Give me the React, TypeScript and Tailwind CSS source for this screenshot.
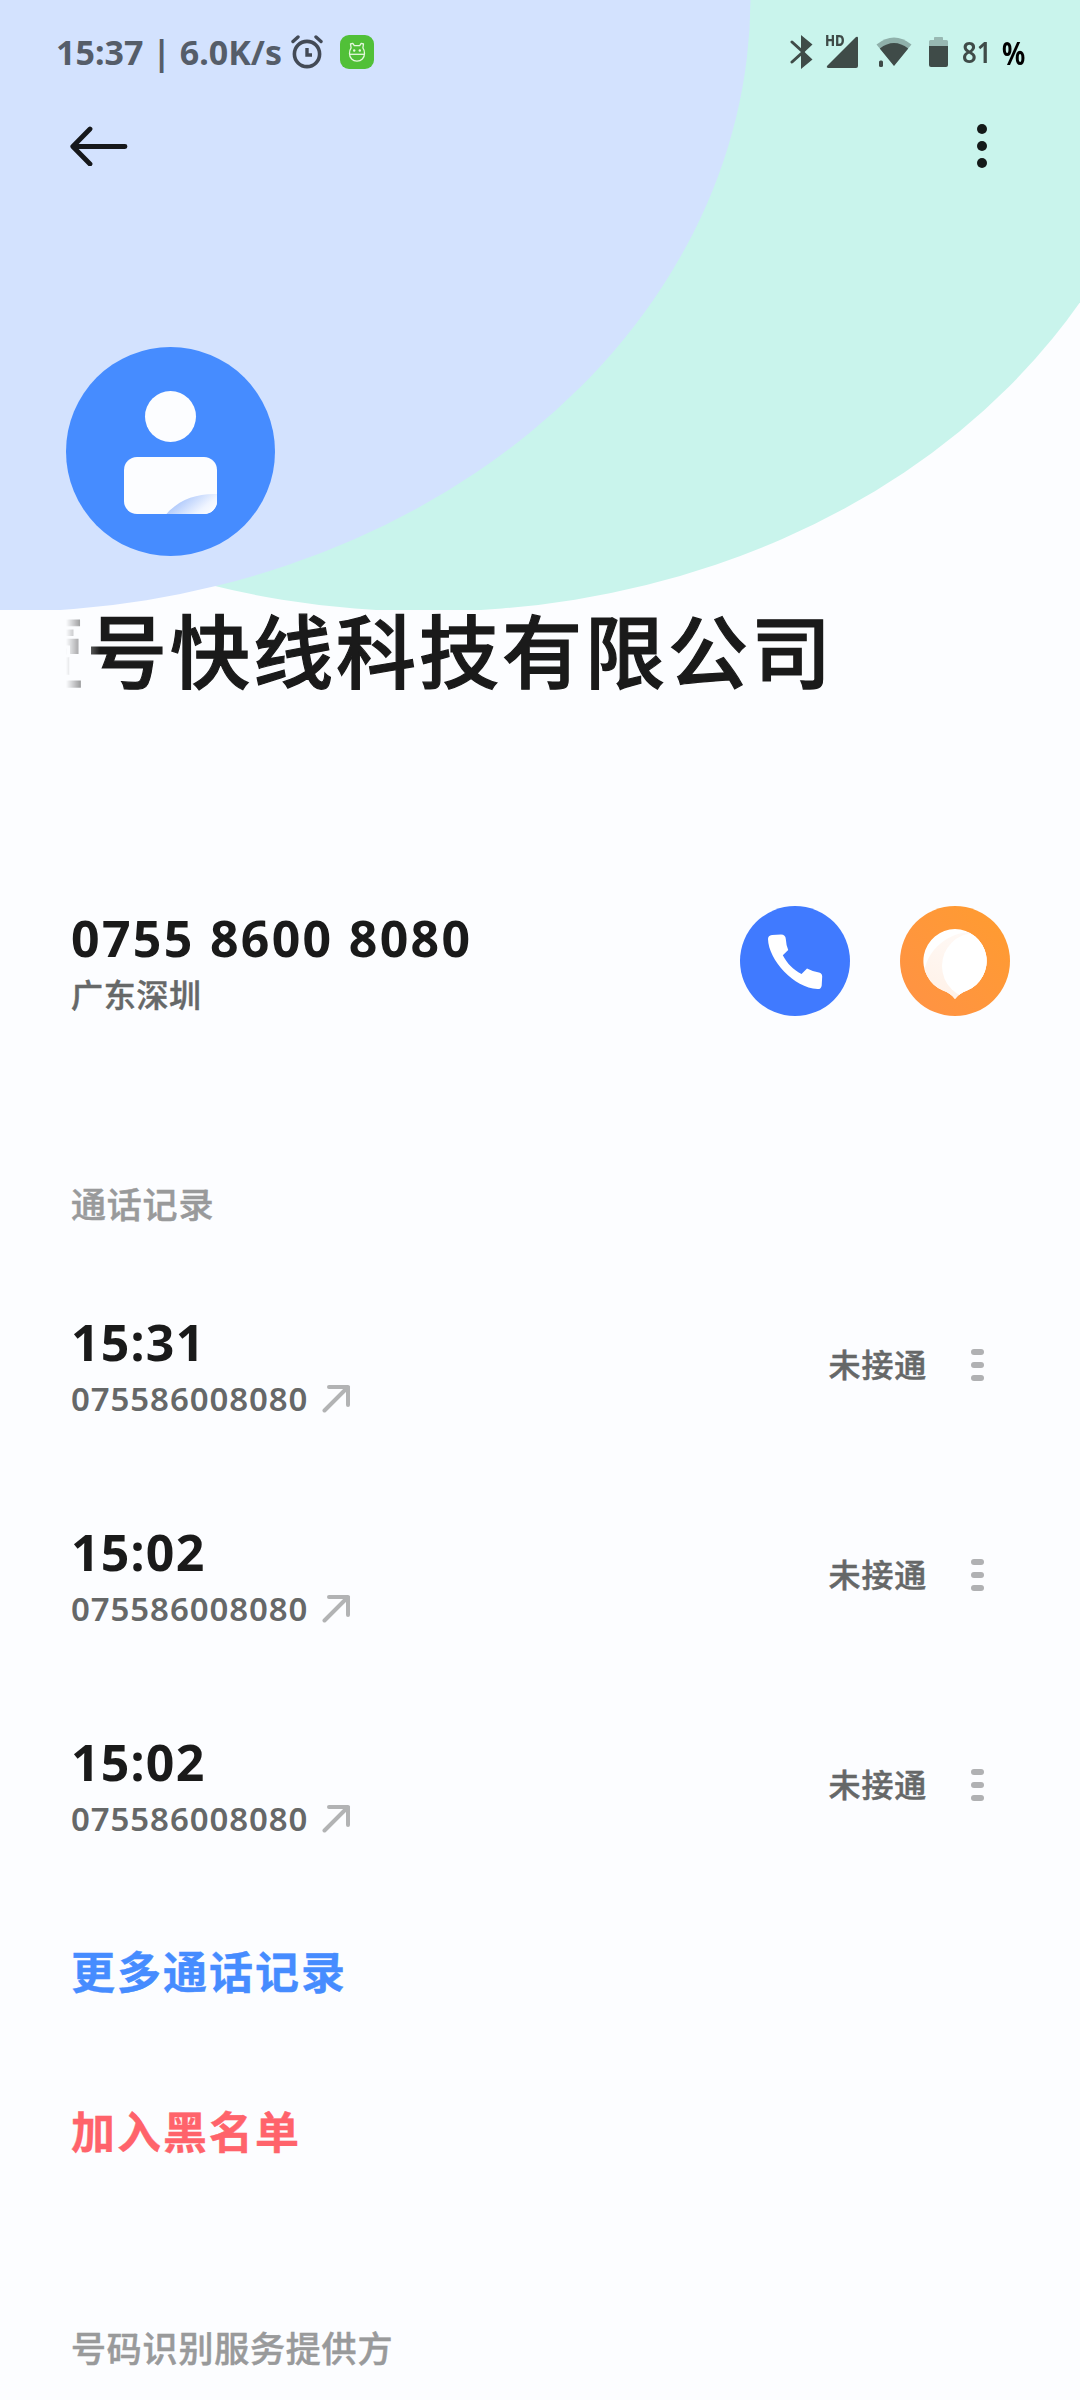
const calls = [
  { id: 1, time: "15:31", number: "075586008080", status: "未接通" },
  { id: 2, time: "15:02", number: "075586008080", status: "未接通" },
  { id: 3, time: "15:02", number: "075586008080", status: "未接通" },
];

const Backdrop = () => (
  <svg className="absolute top-0 left-0 -z-10" width="1080" height="610" viewBox="0 0 1080 610">
    <ellipse cx="428.5" cy="-2.5" rx="750.5" ry="614" fill="#c9f4ec" />
    <ellipse cx="0" cy="-2.5" rx="750.5" ry="614.5" fill="#d3e2fe" />
  </svg>
);

const StatusBar = () => {
  return (
    <div className="flex items-center justify-between h-[104px] pl-[56px] pr-[54px]">
      {/* left */}
      <div className="flex items-center">
        <p className="w-[235px] text-[34px] leading-none font-bold whitespace-nowrap text-[#555d69]">
          15:37 | 6.0K/s
        </p>
        <svg width="32" height="34" viewBox="0 0 32 34" fill="none" stroke="#434a56">
          <circle cx="16" cy="19" r="12.6" strokeWidth="3.6" />
          <path d="M2 6.5 7 2M30 6.5 25 2" strokeWidth="3.4" strokeLinecap="round" />
          <path d="M16 13v7h5" strokeWidth="3.4" />
        </svg>
        <svg className="ml-[17px]" width="34" height="34" viewBox="0 0 34 34" fill="none">
          <rect width="34" height="34" rx="9" fill="#51c038" />
          <g stroke="#e6f8df" strokeWidth="1.3" strokeLinejoin="round">
            <path d="M9.500 18.500c0-2.600.6-4.300 1.600-5.700L10.500 9l2.300-.6 1.500 2.200h5.400l1.500-2.200 2.300.6-.6 3.800c1 1.400 1.600 3.100 1.600 5.700 0 4.500-3.200 7.600-7.500 7.600s-7.500-3.100-7.500-7.600z" />
            <path d="M9.500 19.300h15" />
          </g>
          <circle cx="14.2" cy="15.500" r="1.200" fill="#e6f8df" />
          <circle cx="19.800" cy="15.500" r="1.200" fill="#e6f8df" />
        </svg>
      </div>
      {/* right */}
      <div className="flex items-center">
        <svg width="24" height="36" viewBox="0 0 24 36">
          <path d="M11 1 22.500 10.500 14.500 18l8 7.500L11 35z" fill="#3f4b48" />
          <path d="M2 8l11 10L2 28" fill="none" stroke="#3f4b48" strokeWidth="3" strokeLinecap="round" />
        </svg>
        <div className="relative ml-[12px] w-[32px] h-[34px]">
          <span className="absolute -top-[2px] -left-px text-[15px] leading-none font-extrabold text-[#3f4b48]">
            <span className="inline-block origin-left scale-x-[.88]">HD</span>
          </span>
          <svg width="32" height="34" viewBox="0 0 32 34">
            <path d="M1 31 30 2q2-1 2 1v28q0 2-2 2H2q-2-.5-1-2z" fill="#3f4b48" />
          </svg>
        </div>
        <svg className="ml-[18px]" width="36" height="32" viewBox="0 0 36 32">
          <path d="M0.500 8.500Q18-5.500 35.500 8.500L18 29.500z" fill="#8fb0aa" />
          <path d="M3.800 12.500Q18 1.500 32.200 12.500L18 30z" fill="#3f4b48" />
          <rect x="3" y="24.500" width="4" height="6.500" rx="1.500" fill="#3f4b48" />
        </svg>
        <svg className="ml-[17px]" width="19" height="32" viewBox="0 0 19 32">
          <path d="M0 10V5.500q0-1.500 1.500-1.500H5V1.500Q5 1 6 1h7q1 0 1 .5V4h3.500Q19 4 19 5.500V10z" fill="#98b8b2" />
          <path d="M0 10h19v19q0 2-2 2H2q-2 0-2-2z" fill="#3f4b48" />
        </svg>
        <span className="ml-[14px] w-[40px] text-[28px] leading-none font-semibold text-[#3f4b48]">
          <span className="inline-block origin-left scale-x-[.92]">81</span>
        </span>
        <span className="w-[24px] text-[33px] leading-none font-bold text-black">
          <span className="inline-block origin-left scale-x-[.78]">%</span>
        </span>
      </div>
    </div>
  );
};

const TopBar = () => {
  return (
    <div className="flex items-center justify-between h-[84px] pl-[70px] pr-[93px]">
      <svg width="58" height="40" viewBox="0 0 58 40" fill="none" stroke="#16181b" strokeWidth="4.800" strokeLinecap="round" strokeLinejoin="round">
        <path d="M55 20.500H3M20 3 2.800 20.500 20 38" />
      </svg>
      <div className="flex flex-col gap-[7px]">
        <span className="size-[10px] rounded-full bg-[#141a19]"></span>
        <span className="size-[10px] rounded-full bg-[#141a19]"></span>
        <span className="size-[10px] rounded-full bg-[#141a19]"></span>
      </div>
    </div>
  );
};

const Avatar = () => (
  <svg width="209" height="209" viewBox="0 0 209 209">
    <defs>
      <linearGradient id="fold" x1="0.1" y1="0.5" x2="0.9" y2="0.9">
        <stop offset="0" stopColor="#a9c5fb" />
        <stop offset="0.7" stopColor="#f0f5ff" />
        <stop offset="1" stopColor="#fcfdff" />
      </linearGradient>
      <clipPath id="body">
        <rect x="58" y="110" width="93" height="57" rx="13" />
      </clipPath>
    </defs>
    <circle cx="104.500" cy="104.500" r="104.500" fill="#468cff" />
    <circle cx="104.500" cy="69.500" r="25.500" fill="#fcfdff" />
    <g clipPath="url(#body)">
      <rect x="58" y="110" width="93" height="57" fill="#fcfdff" />
      <path d="M100 167.500C113 152 132 146 152 147V168z" fill="url(#fold)" />
    </g>
  </svg>
);

const NumberRow = () => {
  return (
    <div className="flex items-center justify-between h-[210px] pl-[71px] pr-[70px]">
      <div className="flex flex-col gap-[16px] pt-[2px]">
        <p className="text-[50px] leading-none font-bold tracking-[2.3px] text-[#1a1a1a]">0755 8600 8080</p>
        <p className="text-[32px] leading-none font-medium tracking-[.7px] text-[#666868] [-webkit-text-stroke:.5px_#666868]">
          广东深圳
        </p>
      </div>
      <div className="flex gap-[50px]">
        <button className="size-[110px] rounded-full bg-[#407aff]">
          <svg width="110" height="110" viewBox="0 0 110 110">
            <path
              d="M28 33q0-3.500 4-4l9-.5q4.500 0 4.800 4.500.3 6 2.400 11-3 3-5.400 5.200c4.500 8.500 10 14 18.700 18.800l5.500-5.500q6 3.200 12 4 3.200.8 3.200 4l-.5 9q-.5 3.800-4.200 3.600C54 82 28.500 54 28 33z"
              fill="#fff"
            />
          </svg>
        </button>
        <button className="size-[110px] rounded-full bg-linear-to-tr from-[#ff9245] to-[#ff9c2e]">
          <svg width="110" height="110" viewBox="0 0 110 110">
            <defs>
              <linearGradient id="shade" x1="0.2" y1="1" x2="0.6" y2="0">
                <stop offset="0" stopColor="#ffeee2" />
                <stop offset="1" stopColor="#fffaf7" />
              </linearGradient>
              <clipPath id="bubble">
                <path d="M55 23a32 32 0 0 1 12 61.500Q59.500 87 55 93 50.500 87 43 84.500A32 32 0 0 1 55 23z" />
              </clipPath>
            </defs>
            <g clipPath="url(#bubble)">
              <rect width="110" height="110" fill="#fff" />
              <circle cx="72" cy="75" r="49" fill="url(#shade)" />
              <circle cx="75" cy="60" r="33" fill="#fff" />
            </g>
          </svg>
        </button>
      </div>
    </div>
  );
};

const CallRow = ({ time, number, status }: { time: string; number: string; status: string }) => {
  return (
    <div className="flex items-center justify-between h-[210px] pl-[71px] pr-[96px]">
      <div className="flex flex-col gap-[15px] pt-[2px]">
        <p className="text-[50px] leading-none font-bold tracking-[1.200px] text-[#1a1a1a]">{time}</p>
        <div className="flex items-center gap-[14px]">
          <p className="text-[33px] leading-none font-semibold tracking-[.9px] text-[#666868]">{number}</p>
          <svg width="29" height="29" viewBox="0 0 29 29" fill="none" stroke="#b2b3b4" strokeWidth="4" strokeLinecap="round" strokeLinejoin="round">
            <path d="M2.500 26.500 26 3M7 3h19v18" />
          </svg>
        </div>
      </div>
      <div className="flex items-center">
        <p className="text-[32px] leading-none font-medium tracking-[.8px] text-[#666868] [-webkit-text-stroke:.5px_#666868]">
          {status}
        </p>
        <div className="flex flex-col gap-[7px] ml-[44px]">
          <span className="w-[13px] h-[6px] rounded-[3px] bg-[#b0b1b3]"></span>
          <span className="w-[13px] h-[6px] rounded-[3px] bg-[#b0b1b3]"></span>
          <span className="w-[13px] h-[6px] rounded-[3px] bg-[#b0b1b3]"></span>
        </div>
      </div>
    </div>
  );
};

export default function App() {
  return (
    <div className="relative isolate flex flex-col w-[1080px] h-[2400px] overflow-hidden bg-[#fcfdff] font-['Noto_Sans','Noto_Sans_CJK_SC',sans-serif]">
      <Backdrop />
      <StatusBar />
      <TopBar />
      <div className="pt-[159px] pl-[66px]">
        <Avatar />
      </div>
      {/* scrolling contact name */}
      <div className="flex items-center h-[192px] pb-[3px] ml-[66px] overflow-hidden [mask-image:linear-gradient(to_right,transparent,black_34px)]">
        <h1 className="-ml-[62px] text-[80px] leading-[100px] font-medium tracking-[3px] whitespace-nowrap text-[#1a1a1a] [-webkit-text-stroke:1.2px_#1a1a1a]">
          壹号快线科技有限公司
        </h1>
      </div>
      <div className="pt-[108px]">
        <NumberRow />
      </div>
      {/* call history */}
      <div className="flex items-center h-[110px] pl-[71px] mt-[83px] mb-px">
        <h2 className="text-[35px] leading-none font-medium tracking-[.8px] text-[#999a9b] [-webkit-text-stroke:.5px_#999a9b]">
          通话记录
        </h2>
      </div>
      {calls.map((call) => (
        <CallRow key={call.id} time={call.time} number={call.number} status={call.status} />
      ))}
      <button className="flex items-center h-[160px] pt-[4px] pl-[71px] text-[44px] leading-none font-bold tracking-[2px] text-[#468cff] [-webkit-text-stroke:.4px_#468cff]">
        更多通话记录
      </button>
      <button className="flex items-center h-[160px] pt-[4px] pl-[71px] text-[44px] leading-none font-bold tracking-[2px] text-[#ff636b] [-webkit-text-stroke:.4px_#ff636b]">
        加入黑名单
      </button>
      <p className="pt-[121px] pl-[71px] text-[35px] leading-none font-medium tracking-[.8px] text-[#999a9b] [-webkit-text-stroke:.5px_#999a9b]">
        号码识别服务提供方
      </p>
    </div>
  );
}
